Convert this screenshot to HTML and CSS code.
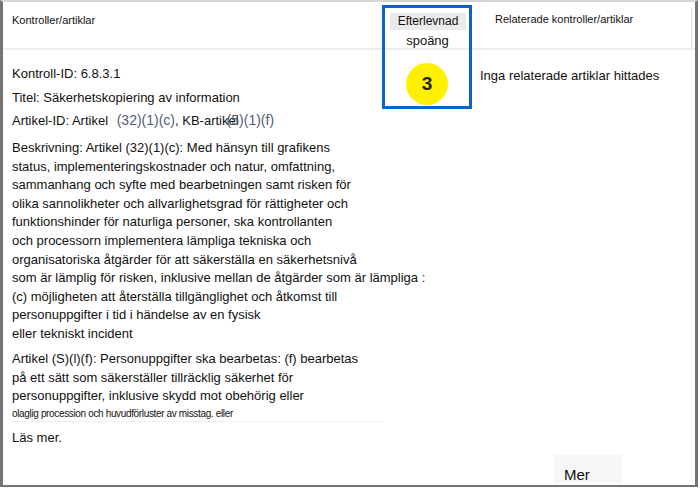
FILE: index.html
```html
<!DOCTYPE html>
<html lang="sv">
<head>
<meta charset="utf-8">
<link rel="stylesheet" href="styles.css">
</head>
<body>
<div class="frame">
  <div class="grid">
    <div class="hcell hc1"><span>Kontroller/artiklar</span></div>
    <div class="hcell hc2">
      <div class="hinner">
        <div class="eft">Efterlevnad</div>
        <div class="spo">spoäng</div>
      </div>
    </div>
    <div class="hcell hc3"><div class="hinner">Relaterade kontroller/artiklar</div></div>

    <div class="bcell bc1">
      <p class="line first">Kontroll-ID: 6.8.3.1</p>
      <p class="line titel">Titel: Säkerhetskopiering av information</p>
      <p class="line art">Artikel-ID: Artikel <span class="ref r1">(32)(1)(c)</span>, KB-artikel<span class="ref r2">(5)(1)(f)</span></p>
      <p class="desc">Beskrivning: Artikel (32)(1)(c): Med hänsyn till grafikens<br>status, implementeringskostnader och natur, omfattning,<br>sammanhang och syfte med bearbetningen samt risken för<br>olika sannolikheter och allvarlighetsgrad för rättigheter och<br>funktionshinder för naturliga personer, ska kontrollanten<br>och processorn implementera lämpliga tekniska och<br>organisatoriska åtgärder för att säkerställa en säkerhetsnivå<br>som är lämplig för risken, inklusive mellan de åtgärder som är lämpliga :<br>(c) möjligheten att återställa tillgänglighet och åtkomst till<br>personuppgifter i tid i händelse av en fysisk<br>eller tekniskt incident</p>
      <p class="desc desc2">Artikel (S)(l)(f): Personuppgifter ska bearbetas: (f) bearbetas<br>på ett sätt som säkerställer tillräcklig säkerhet för<br>personuppgifter, inklusive skydd mot obehörig eller</p>
      <p class="small">olaglig procession och huvudförluster av misstag. eller</p>
      <p class="line more">Läs mer.</p>
    </div>
    <div class="bcell bc2">
      <div class="score">3</div>
    </div>
    <div class="bcell bc3">
      <p class="line none">Inga relaterade artiklar hittades</p>
      <div class="merbtn">Mer</div>
    </div>
  </div>
  <div class="highlight"></div>
</div>
</body>
</html>
```
FILE: styles.css
```css
html, body {
  margin: 0;
  padding: 0;
  background: #ffffff;
}
body {
  font-family: "Liberation Sans", Arial, sans-serif;
  color: #111;
}
.frame {
  position: relative;
  box-sizing: border-box;
  width: 698px;
  height: 487px;
  border-top: 2px solid #d6d6d6;
  border-left: 3px solid #747474;
  border-right: 3px solid #747474;
  border-bottom: 2px solid #747474;
  overflow: hidden;
}
.grid {
  display: grid;
  grid-template-columns: 379px 90px 223px;
  grid-template-rows: 48px 433px;
  height: 100%;
}
.hcell {
  border-bottom: 2px solid #ececec;
  font-size: 11px;
  line-height: 13px;
}
.hc1 {
  padding: 12px 0 0 9px;
}
.hc2 .hinner {
  margin: 6px 2px 0 8px;
  padding-top: 5px;
  height: 40px;
  box-sizing: border-box;
  border-right: 1px solid #e6e6e6;
  text-align: center;
}
.eft {
  background: #ebebeb;
  font-size: 12px;
  line-height: 17px;
  margin-right: 3px;
}
.spo {
  font-size: 13px;
  line-height: 16px;
  margin-top: 3px;
  padding-right: 4px;
}
.hc3 .hinner {
  margin: 6px 2px 0 0;
  height: 40px;
  border-right: 2px solid #ececec;
  padding: 5px 0 0 23px;
  box-sizing: border-box;
}
.bcell {
  min-width: 0;
}
.bc1 {
  padding: 14px 0 0 9px;
  font-size: 13px;
  white-space: nowrap;
}
p {
  margin: 0;
}
.line {
  line-height: 19px;
}
.titel {
  margin-top: 5px;
}
.art {
  margin-top: 4px;
}
.ref {
  color: #4f5d78;
  font-size: 14px;
}
.r1 {
  margin-left: 5px;
}
.r2 {
  margin-left: -12px;
}
.desc {
  margin-top: 9px;
  line-height: 18.6px;
}
.desc2 {
  margin-top: 6.5px;
}
.small {
  font-size: 10px;
  line-height: 15px;
  letter-spacing: -0.35px;
  width: 372px;
  border-bottom: 1px solid #f0f0f0;
}
.more {
  margin-top: 6.5px;
}
.bc2 {
  display: flex;
  justify-content: center;
  padding-top: 13px;
}
.score {
  width: 42px;
  height: 42px;
  border-radius: 50%;
  background: #fff000;
  color: #222;
  font-weight: bold;
  font-size: 19px;
  line-height: 42px;
  text-align: center;
}
.bc3 {
  display: flex;
  flex-direction: column;
  align-items: flex-start;
  padding-left: 8px;
  font-size: 13px;
}
.none {
  margin-top: 16px;
}
.merbtn {
  margin-top: auto;
  margin-left: 74px;
  width: 58px;
  height: 28px;
  background: #f6f6f6;
  padding-left: 10px;
  font-size: 15px;
  line-height: 40px;
  overflow: hidden;
}
.highlight {
  position: absolute;
  left: 379px;
  top: 3px;
  width: 90px;
  height: 104px;
  box-sizing: border-box;
  border: 3px solid #0b63c5;
}
```
